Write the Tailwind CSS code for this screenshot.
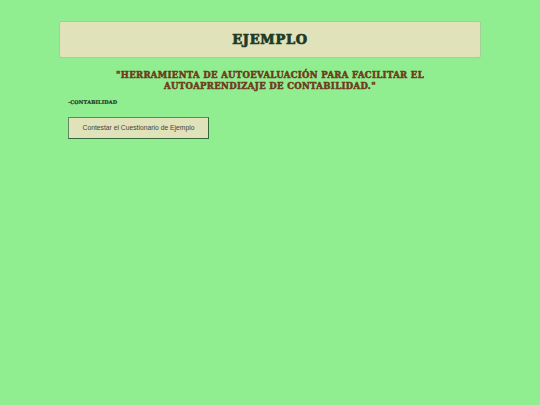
<!DOCTYPE html>
<html lang="es">
<head>
  <meta charset="UTF-8" />
  <title>Ejemplo</title>
  <script src="https://cdn.jsdelivr.net/npm/@tailwindcss/browser@4"></script>
</head>
<body class="bg-[#90ee90] min-h-screen font-['DejaVu_Serif',serif]">
  <div class="w-[422px] mx-auto pt-[21px]">
    <header class="h-[37px] flex items-center justify-center bg-[#e0e2b9] border border-[#a3cf98] rounded-[2px]">
      <h1 class="text-[13px] tracking-[0.7px] font-bold text-[#1d3a26] [-webkit-text-stroke:0.7px_#1d3a26]">EJEMPLO</h1>
    </header>

    <h2 class="mt-[12px] text-center text-[8.5px] tracking-[0.35px] leading-[11px] font-bold text-[#6f3a1c] [-webkit-text-stroke:0.5px_#6f3a1c] px-[40px]">"HERRAMIENTA DE AUTOEVALUACIÓN PARA FACILITAR EL AUTOAPRENDIZAJE DE CONTABILIDAD."</h2>

    <p class="mt-[6px] ml-[9px] text-[5px] tracking-[0.15px] leading-[8px] font-bold text-[#1d3a26] [-webkit-text-stroke:0.2px_#1d3a26]">-CONTABILIDAD</p>

    <button class="mt-[11px] ml-[9px] w-[141px] h-[22px] flex items-center justify-center bg-[#e0e2b9] border border-t-[#5f8a5f] border-l-[#5f8a5f] border-r-[#33683a] border-b-[#33683a] font-['Liberation_Sans',sans-serif] text-[6.75px] text-[#3f443a]">Contestar el Cuestionario de Ejemplo</button>
  </div>
</body>
</html>
